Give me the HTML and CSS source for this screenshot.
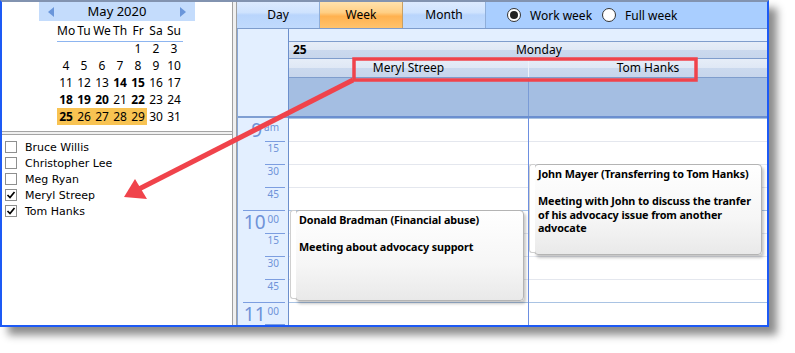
FILE: index.html
```html
<!DOCTYPE html>
<html lang="en">
  <head>
    <meta charset="UTF-8" />
    <meta name="viewport" content="width=device-width, initial-scale=1.0" />
    <title>Advocate Schedule</title>
    <link rel="stylesheet" href="styles.css">
  </head>
  <body>
    <div class="window">
      <div class="left">
        <div class="calendar">
          <div class="cal-head">
            <svg class="arrow" width="6" height="10" viewBox="0 0 6 10"><polygon points="6,0 6,10 0,5" /></svg>
            <span class="cal-title">May 2020</span>
            <svg class="arrow" width="6" height="10" viewBox="0 0 6 10"><polygon points="0,0 0,10 6,5" /></svg>
          </div>
          <div class="cal-grid">
            <span class="dow">Mo</span><span class="dow">Tu</span><span class="dow">We</span><span class="dow">Th</span><span class="dow">Fr</span><span class="dow">Sa</span><span class="dow">Su</span>
            <span></span><span></span><span></span><span></span><span>1</span><span>2</span><span>3</span>
            <span>4</span><span>5</span><span>6</span><span>7</span><span>8</span><span>9</span><span>10</span>
            <span>11</span><span>12</span><span>13</span><span class="busy">14</span><span class="busy">15</span><span>16</span><span>17</span>
            <span class="busy">18</span><span class="busy">19</span><span class="busy">20</span><span>21</span><span class="busy">22</span><span>23</span><span>24</span>
            <span class="busy sel">25</span><span class="sel">26</span><span class="sel">27</span><span class="sel">28</span><span class="sel">29</span><span>30</span><span>31</span>
          </div>
        </div>
        <div class="hsplit"></div>
        <ul class="people">
          <li><span class="box"></span>Bruce Willis</li>
          <li><span class="box"></span>Christopher Lee</li>
          <li><span class="box"></span>Meg Ryan</li>
          <li><span class="box"><svg width="10" height="10" viewBox="0 0 10 10"><path d="M1.5 5 L4 7.5 L8.5 2" /></svg></span>Meryl Streep</li>
          <li><span class="box"><svg width="10" height="10" viewBox="0 0 10 10"><path d="M1.5 5 L4 7.5 L8.5 2" /></svg></span>Tom Hanks</li>
        </ul>
      </div>
      <div class="vsplit"></div>
      <div class="right">
        <div class="toolbar">
          <div class="tab">Day</div>
          <div class="tab active">Week</div>
          <div class="tab">Month</div>
          <div class="options">
            <span class="radio on"></span><span class="opt">Work week</span>
            <span class="radio"></span><span class="opt">Full week</span>
          </div>
        </div>
        <div class="sched">
          <div class="times">
            <div class="times-head"></div>
            <div class="slot hour first"><span class="hnum">9</span><span class="hsup">am</span></div>
            <div class="slot q">15</div>
            <div class="slot q">30</div>
            <div class="slot q">45</div>
            <div class="slot hour"><span class="hnum">10</span><span class="hsup">00</span></div>
            <div class="slot q">15</div>
            <div class="slot q">30</div>
            <div class="slot q">45</div>
            <div class="slot hour last"><span class="hnum">11</span><span class="hsup">00</span></div>
            <div class="slot q"></div>
          </div>
          <div class="days">
            <div class="blank"></div>
            <div class="daterow"><b>25</b><span class="dayname">Monday</span></div>
            <div class="resrow">
              <div class="res">Meryl Streep</div>
              <div class="res">Tom Hanks</div>
            </div>
            <div class="allday">
              <div class="allday-col"></div>
              <div class="allday-col"></div>
            </div>
            <div class="cols">
              <div class="col">
                <div class="event donald">
                  <p>Donald Bradman (Financial abuse)</p>
                  <p>Meeting about advocacy support</p>
                </div>
              </div>
              <div class="col">
                <div class="event john">
                  <p>John Mayer (Transferring to Tom Hanks)</p>
                  <p>Meeting with John to discuss the tranfer of his advocacy issue from another advocate</p>
                </div>
              </div>
            </div>
          </div>
        </div>
      </div>
    </div>

    <!-- red callout drawn over the screenshot -->
    <svg class="notes" width="795" height="353" viewBox="0 0 795 353">
      <rect x="354" y="59" width="342" height="21" fill="none" stroke="#f0434b" stroke-width="3.5" />
      <line x1="353" y1="80" x2="139" y2="189" stroke="#f0434b" stroke-width="5" />
      <polygon points="124,197 135,179 147,199" fill="#f0434b" />
    </svg>
  </body>
</html>
```

FILE: styles.css
```css
* {
  margin: 0;
  padding: 0;
  box-sizing: border-box;
}

body {
  font-family: "Noto Sans", sans-serif;
  font-size: 12px;
  color: #000;
  background-color: #fff;
  position: relative;
  width: 795px;
  height: 353px;
  overflow: hidden;
}

/* outer window */
.window {
  display: flex;
  width: 769px;
  height: 327px;
  border: 2px solid #1d5af5;
  border-top-color: #8293b0;
  box-shadow: 8px 8px 8px rgba(0, 0, 0, 0.45);
  background-color: #fff;
}

/* left side: month + people */
.left {
  width: 230px;
  display: flex;
  flex-direction: column;
}

.calendar {
  height: 129px;
  padding-left: 37px;
}

.cal-head {
  width: 156px;
  height: 19px;
  background-color: #c4dcfc;
  display: flex;
  align-items: center;
  justify-content: space-between;
  padding: 0 9px;
}

.arrow polygon {
  fill: #6a96da;
}

.cal-title {
  font-size: 13px;
  line-height: 19px;
}

.cal-grid {
  display: grid;
  grid-template-columns: repeat(7, 18px);
  grid-auto-rows: 17px;
  margin-left: 18px;
  margin-top: 2px;
  line-height: 17px;
  text-align: center;
}

.dow {
  border-bottom: 1px solid #8db5f0;
  margin-bottom: 2px;
  line-height: 16px;
  height: 19px;
}

.busy {
  font-weight: bold;
}

.sel {
  background-color: #f8c352;
}

.hsplit {
  height: 4px;
  border-top: 1px solid #a4a4a4;
  border-bottom: 1px solid #a4a4a4;
  background-color: #f0f0f0;
}

.people {
  list-style: none;
  padding-top: 4px;
  font-family: "DejaVu Sans", sans-serif;
  font-size: 11px;
}

.people li {
  display: flex;
  align-items: center;
  height: 16px;
  padding-left: 3px;
}

.box {
  width: 12px;
  height: 12px;
  border: 1px solid #8e8f8f;
  margin-right: 8px;
  display: flex;
  align-items: center;
  justify-content: center;
}

.box path {
  fill: none;
  stroke: #000;
  stroke-width: 1.7;
}

.vsplit {
  width: 5px;
  border-left: 1px solid #a0a0a0;
  border-right: 1px solid #a0a0a0;
  background-color: #f0f0f0;
}

/* right side: scheduler */
.right {
  flex: 1;
  display: flex;
  flex-direction: column;
  min-width: 0;
}

.toolbar {
  height: 27px;
  display: flex;
  border-bottom: 1px solid #7d9ccc;
}

.tab {
  width: 83px;
  text-align: center;
  line-height: 26px;
  border-right: 1px solid #8faed9;
  background: linear-gradient(#dceaff 0, #cfe3fe 40%, #b9d5fc 50%, #c0dafd 100%);
}

.tab.active {
  background: linear-gradient(#ffe2ad 0, #ffcf85 40%, #ffb14f 55%, #ffc36c 100%);
  border-right-color: #c8a064;
}

.options {
  flex: 1;
  display: flex;
  align-items: center;
  background-color: #a9ceff;
  padding-left: 21px;
}

.radio {
  width: 14px;
  height: 14px;
  border: 1px solid #333;
  border-radius: 50%;
  background-color: #fff;
  display: flex;
  align-items: center;
  justify-content: center;
}

.radio.on::after {
  content: "";
  width: 8px;
  height: 8px;
  border-radius: 50%;
  background-color: #222;
}

.opt {
  margin-left: 9px;
  margin-right: 10px;
}

.sched {
  flex: 1;
  display: flex;
  min-height: 0;
}

.times {
  width: 52px;
  background-color: #e3efff;
  border-left: 1px solid #8aa8d6;
  border-right: 1px solid #6c8fcc;
  overflow: hidden;
  color: #6f93d8;
}

.times-head {
  height: 89px;
  border-bottom: 2px solid #7f9fd3;
}

.slot {
  height: 23px;
  border-top: 1px solid #7c9ee0;
  display: flex;
  justify-content: flex-end;
  align-items: flex-start;
}

.slot.q {
  margin: 0 3px 0 27px;
  padding: 1px 6px 0 0;
  font-size: 10px;
  line-height: 10px;
}

.slot.hour {
  margin: 0 3px 0 5px;
  padding-right: 6px;
}

.slot.first {
  border-top-color: transparent;
}

.slot.last {
  height: 22px;
}

.hnum {
  font-size: 19px;
  line-height: 18px;
  padding-top: 2px;
}

.hsup {
  font-size: 10px;
  line-height: 10px;
  padding-top: 3px;
  margin-left: 2px;
}

.days {
  flex: 1;
  display: flex;
  flex-direction: column;
  min-width: 0;
}

.blank {
  height: 12px;
  background-color: #e3efff;
}

.daterow,
.resrow {
  border-top: 1px solid #7f9dcc;
  background: linear-gradient(#e6edf8 0, #dfe8f5 50%, #cbd9ee 50%, #c7d6ec 100%);
}

.daterow {
  height: 17px;
  display: flex;
  line-height: 16px;
  padding-left: 4px;
}

.dayname {
  flex: 1;
  text-align: center;
  padding-left: 4px;
}

.resrow {
  height: 19px;
  display: flex;
  line-height: 18px;
}

.res {
  flex: 1;
  text-align: center;
}

.res:first-child {
  flex: 0 0 240px;
  border-right: 1px solid #eef3fa;
}

.allday {
  height: 41px;
  display: flex;
  border-top: 1px solid #7f9dcc;
  border-bottom: 2px solid #6b8fcf;
  background-color: #a4bee2;
}

.allday-col:first-child {
  flex: 0 0 240px;
  border-right: 1px solid #7a9bd6;
}

.cols {
  flex: 1;
  display: flex;
  min-height: 0;
}

.col {
  flex: 1;
  position: relative;
  background-image:
    repeating-linear-gradient(#a9c3e3 0 1px, transparent 1px 92px),
    repeating-linear-gradient(#e4e7ee 0 1px, transparent 1px 23px);
}

.col:first-child {
  flex: 0 0 240px;
  border-right: 1px solid #6d8fe0;
}

/* appointments sit at their time on the grid */
.event {
  position: absolute;
  height: 91px;
  padding: 2px 3px 0 3px;
  border: 1px solid #b4b4b4;
  border-radius: 4px;
  background: linear-gradient(#ffffff 0, #f6f6f6 60%, #e9e9e9 100%);
  box-shadow: 2px 3px 3px rgba(0, 0, 0, 0.22);
  font-size: 10.8px;
  letter-spacing: -0.1px;
  font-weight: bold;
  line-height: 13.5px;
}

.event::before {
  content: "";
  position: absolute;
  left: -6px;
  top: -1px;
  bottom: 1px;
  width: 5px;
  border: 1px solid #cfcfcf;
  border-right: none;
  border-radius: 3px 0 0 3px;
  background-color: #fff;
}

.event p + p {
  margin-top: 13.5px;
}

.donald {
  top: 92px;
  left: 6px;
  width: 229px;
}

.john {
  top: 46px;
  left: 5px;
  width: 228px;
}

.notes {
  position: absolute;
  left: 0;
  top: 0;
  pointer-events: none;
}
```
